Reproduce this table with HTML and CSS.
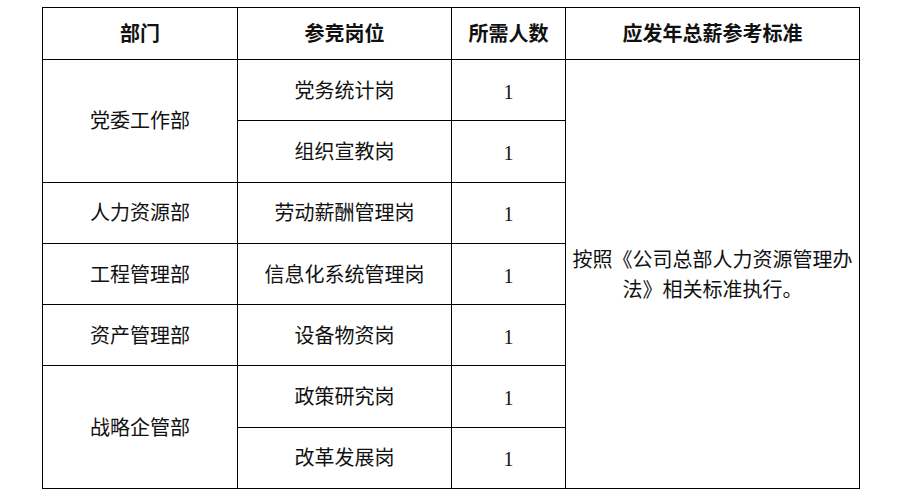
FILE: index.html
```html
<!DOCTYPE html>
<html lang="zh-CN">
<head>
<meta charset="utf-8">
<title>岗位表</title>
<link rel="stylesheet" href="styles.css">
</head>
<body>
<table class="jobs">
  <colgroup>
    <col class="c1"><col class="c2"><col class="c3"><col class="c4">
  </colgroup>
  <thead>
    <tr class="head">
      <th>部门</th><th>参竞岗位</th><th>所需人数</th><th>应发年总薪参考标准</th>
    </tr>
  </thead>
  <tbody>
    <tr>
      <td rowspan="2">党委工作部</td><td>党务统计岗</td><td class="num">1</td>
      <td rowspan="7" class="std">按照《公司总部人力资源管理办法》相关标准执行。</td>
    </tr>
    <tr><td>组织宣教岗</td><td class="num">1</td></tr>
    <tr><td>人力资源部</td><td>劳动薪酬管理岗</td><td class="num">1</td></tr>
    <tr><td>工程管理部</td><td>信息化系统管理岗</td><td class="num">1</td></tr>
    <tr><td>资产管理部</td><td>设备物资岗</td><td class="num">1</td></tr>
    <tr><td rowspan="2">战略企管部</td><td>政策研究岗</td><td class="num">1</td></tr>
    <tr><td>改革发展岗</td><td class="num">1</td></tr>
  </tbody>
</table>
</body>
</html>
```
FILE: styles.css
```css
html, body {
  margin: 0;
  padding: 0;
  background: #fff;
}
body {
  font-family: "Liberation Serif", "Noto Sans CJK SC", serif;
  color: #111;
}
.jobs {
  border-collapse: collapse;
  table-layout: fixed;
  width: 817px;
  margin: 7px 0 0 42px;
  font-size: 20px;
}
.c1 { width: 195px; }
.c2 { width: 214px; }
.c3 { width: 114px; }
.c4 { width: 294px; }
.jobs th, .jobs td {
  border: 1px solid #000;
  text-align: center;
  vertical-align: middle;
  padding: 1px 0 0 0;
  line-height: 30px;
  font-weight: normal;
}
.jobs th {
  font-weight: bold;
  padding-top: 0;
}
.jobs td.num {
  padding-top: 3px;
}
.head { height: 52px; }
.jobs tbody tr { height: 61.3px; }
.jobs td.std {
  padding: 2px 4px 0 4px;
  text-align: center;
}
```
